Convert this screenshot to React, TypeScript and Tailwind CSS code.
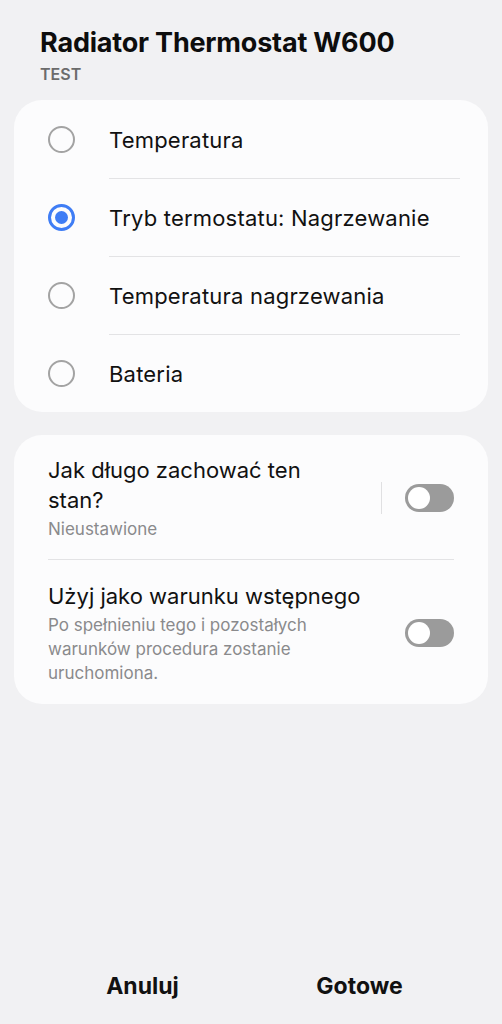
const options = [
  { label: 'Temperatura', checked: false },
  { label: 'Tryb termostatu: Nagrzewanie', checked: true },
  { label: 'Temperatura nagrzewania', checked: false },
  { label: 'Bateria', checked: false },
];

function Radio({ checked }: { checked: boolean }) {
  if (checked) {
    return (
      <span className="flex h-[27px] w-[27px] items-center justify-center rounded-full border-[3px] border-[#3f7df5]">
        <span className="h-[13px] w-[13px] rounded-full bg-[#3f7df5]" />
      </span>
    );
  }
  return <span className="block h-[27px] w-[27px] rounded-full border-2 border-[#a3a3a3]" />;
}

function Toggle() {
  return (
    <span className="flex h-[28px] w-[49px] shrink-0 items-center rounded-full bg-[#9b9b9b] p-[3px]">
      <span className="h-[22px] w-[22px] rounded-full bg-white" />
    </span>
  );
}

export default function App() {
  return (
    <main
      className="flex min-h-[1024px] flex-col bg-[#f1f1f3] text-[#111]"
      style={{ fontFamily: 'Inter, "Noto Sans", sans-serif' }}
    >
      <header className="px-10 pt-[26px]">
        <h1 className="text-[27px] font-bold leading-[34px] tracking-[-0.2px] text-[#0d0d0d]">
          Radiator Thermostat W600
        </h1>
        <p className="mt-[3px] text-[16px] font-semibold leading-[22px] text-[#6b6b6b]">TEST</p>
      </header>

      <section className="mx-[14px] mt-[15px] rounded-[28px] bg-[#fcfcfd]">
        {options.map((o, i) => (
          <div key={o.label} className="flex h-[78px] items-center">
            <div className="flex w-[95px] justify-center">
              <Radio checked={o.checked} />
            </div>
            <div
              className={`mr-[28px] flex h-full flex-1 items-center ${
                i > 0 ? 'border-t border-[#e3e3e5]' : ''
              }`}
            >
              <span className="pt-[1px] text-[22px] leading-[28px] tracking-[0.2px]">{o.label}</span>
            </div>
          </div>
        ))}
      </section>

      <section className="mx-[14px] mt-[23px] rounded-[28px] bg-[#fcfcfd] px-[34px]">
        <div className="flex items-center border-b border-[#e3e3e5] pt-[20px] pb-[18px]">
          <div className="flex-1 pr-[40px]">
            <p className="text-[22px] leading-[30px]">Jak długo zachować ten stan?</p>
            <p className="mt-[2px] text-[17px] leading-[24px] text-[#8a8a8c]">Nieustawione</p>
          </div>
          <div className="mr-[23px] h-[32px] w-px bg-[#e0e0e2]" />
          <Toggle />
        </div>
        <div className="flex items-center pt-[21px] pb-[19px]">
          <div className="flex-1 pr-[28px]">
            <p className="text-[22px] leading-[30px]">Użyj jako warunku wstępnego</p>
            <p className="mt-[2px] text-[17px] leading-[24px] text-[#8a8a8c]">
              Po spełnieniu tego i pozostałych warunków procedura zostanie uruchomiona.
            </p>
          </div>
          <Toggle />
        </div>
      </section>

      <footer className="mt-auto flex px-[34px] pb-[17px]">
        <button className="flex-1 py-[6px] text-[23px] font-bold leading-[30px] text-[#111]">Anuluj</button>
        <button className="flex-1 py-[6px] text-[23px] font-bold leading-[30px] text-[#111]">Gotowe</button>
      </footer>
    </main>
  );
}
